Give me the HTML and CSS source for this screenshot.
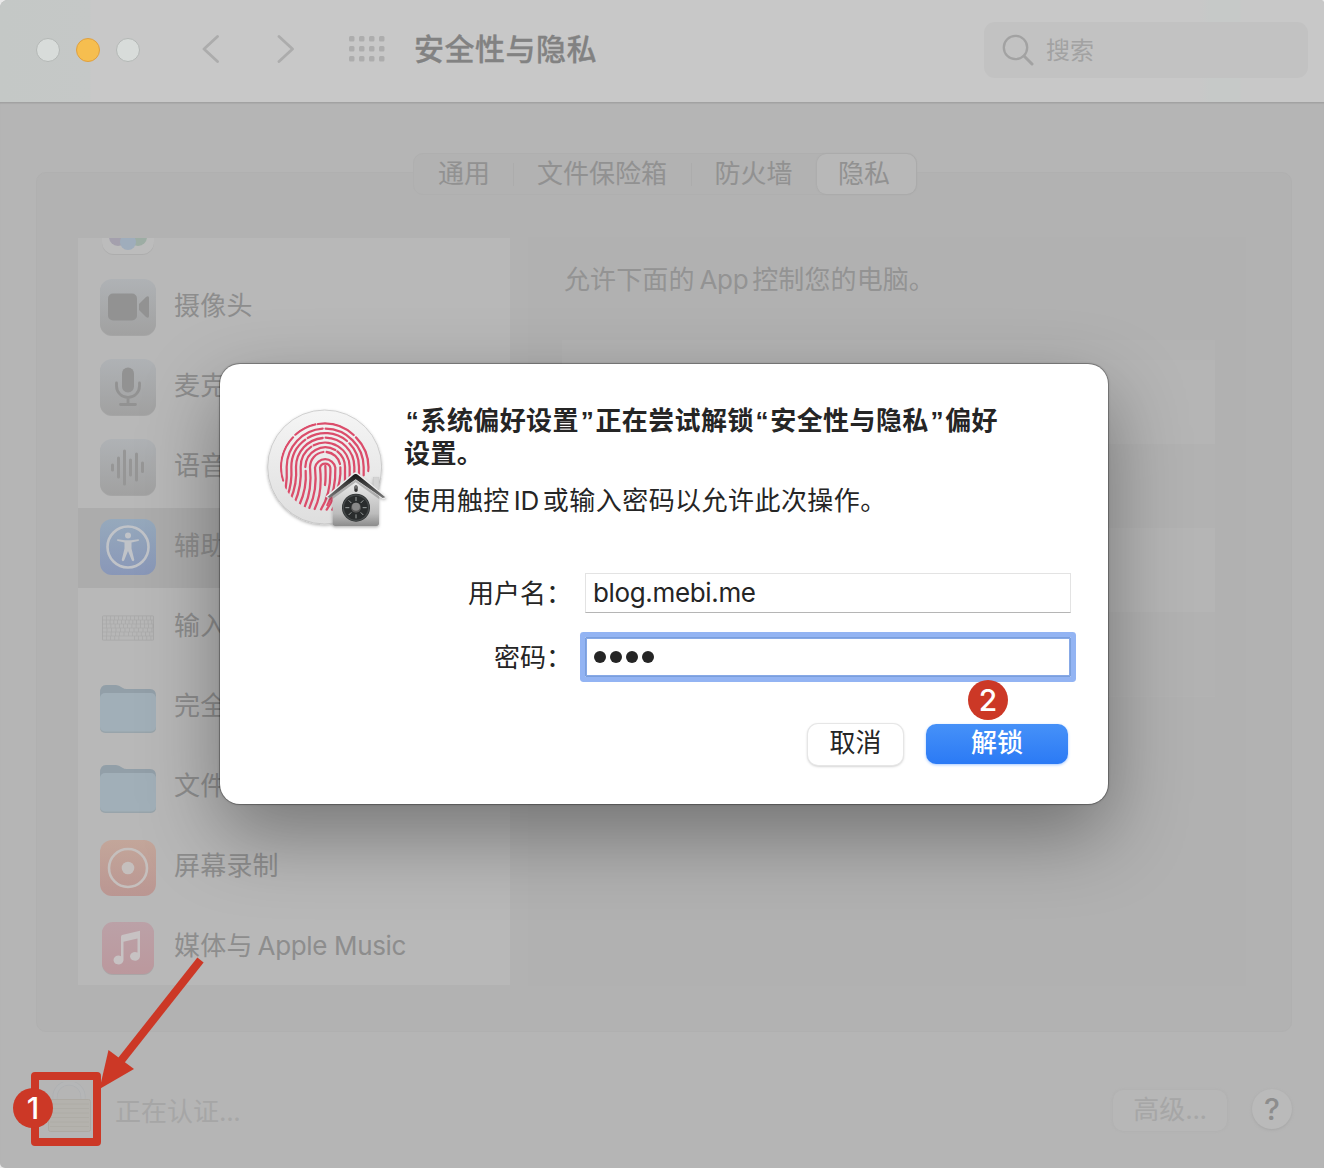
FILE: index.html
```html
<!DOCTYPE html>
<html lang="zh-CN">
<head>
<meta charset="utf-8">
<title>安全性与隐私</title>
<link rel="stylesheet" href="styles.css">
</head>
<body>
<div class="window">
  <header class="toolbar">
    <div class="lights"><i></i><i class="minimize"></i><i></i></div>
    <svg class="nav" width="92" height="28" viewBox="0 0 92 28"><path d="M15.500 1.500L2 14l13.500 12.500M77 1.500L90.500 14 77 26.500"/></svg>
    <svg class="grid" width="36" height="26" viewBox="0 0 36 26">
      <g id="dots"><rect width="5.500" height="5.500" rx="1.500"/><rect x="10" width="5.500" height="5.500" rx="1.500"/><rect x="20" width="5.500" height="5.500" rx="1.500"/><rect x="30" width="5.500" height="5.500" rx="1.500"/></g>
      <use href="#dots" y="10"/><use href="#dots" y="20"/>
    </svg>
    <h1>安全性与隐私</h1>
    <div class="search">
      <svg width="32" height="32" viewBox="0 0 32 32"><circle cx="13.500" cy="13.500" r="11.700"/><path d="M22 22l8 8" stroke-width="3"/></svg>
      <span>搜索</span>
    </div>
  </header>

  <main class="content">
    <nav class="tabs">
      <span class="tab general">通用</span><span class="tab vault">文件保险箱</span><span class="tab firewall">防火墙</span><span class="tab active">隐私</span>
    </nav>
    <section class="panel">
      <ul class="services">
        <li class="row first">
          <svg class="icon" viewBox="0 0 56 56"><rect x="2" y="4" width="52" height="52" rx="12" fill="#adadad"/><rect x="2" y="3" width="52" height="52" rx="12" fill="#bcbcbc"/><circle cx="18" cy="38" r="9" fill="#a4a0ad"/><circle cx="38" cy="38" r="9" fill="#9dada4"/><circle cx="28" cy="43" r="8" fill="#9fadbc"/></svg>
        </li>
        <li class="row">
          <svg class="icon" viewBox="0 0 56 56"><use href="#tile"/><rect x="8" y="14.500" width="29" height="27" rx="5" fill="#929292"/><path d="M39 25l7-7q3-2 3 1v18q0 3-3 1l-7-7z" fill="#929292"/></svg>
          <span>摄像头</span>
        </li>
        <li class="row">
          <svg class="icon" viewBox="0 0 56 56"><use href="#tile"/><rect x="22" y="8.500" width="12" height="25" rx="6" fill="#929292"/><path d="M16.500 24v3a11.500 11.500 0 0 0 23 0v-3M28 39v6M20.500 45.500h15" fill="none" stroke="#929292" stroke-width="2.800" stroke-linecap="round"/></svg>
          <span>麦克风</span>
        </li>
        <li class="row">
          <svg class="icon" viewBox="0 0 56 56"><use href="#tile"/><path d="M12.500 26v5M18.500 19v19M24.500 12v33M30.500 21v15M36.500 15v26M42.500 24v8.500" fill="none" stroke="#969696" stroke-width="3" stroke-linecap="round"/></svg>
          <span>语音识别</span>
        </li>
        <li class="row selected">
          <svg class="icon" viewBox="0 0 56 56"><rect width="56" height="56" rx="12" fill="url(#blue)"/><circle cx="28" cy="28" r="20.500" fill="none" stroke="#c0c3c8" stroke-width="2.600"/><circle cx="28" cy="16.500" r="3" fill="#c0c3c8"/><path d="M17.500 20.300l7.500 1h6l7.500-1q1.500 1-.3 1.800l-6.700 1.500v6l2.800 11.500q-.8 2-2.400.3L28 32l-3.900 9.400q-1.600 1.700-2.400-.3L24.500 29.600v-6l-6.700-1.500q-1.800-.8-.3-1.800z" fill="#c0c3c8"/></svg>
          <span>辅助功能</span>
        </li>
        <li class="row">
          <svg class="icon" viewBox="0 0 56 56"><rect x="2" y="16.500" width="52" height="25" rx="1.500" fill="#a6a6a6"/><g stroke="#b7b7b7" stroke-width="3.300" fill="none"><path d="M2.800 19h50.400" stroke-dasharray="3.400 .6"/><path d="M2.800 23h50.400" stroke-dasharray="3.100 .7"/><path d="M2.800 27h50.400" stroke-dasharray="3.600 .6"/><path d="M2.800 31h50.400" stroke-dasharray="3.900 .6"/><path d="M2.800 35h50.400" stroke-dasharray="3.700 .6"/><path d="M2.800 39h50.400" stroke-dasharray="3.500 .6 3.500 .6 3.500 .6 3.500 .6 15 .6"/></g></svg>
          <span>输入监控</span>
        </li>
        <li class="row low">
          <svg class="icon" viewBox="0 0 56 56"><use href="#folder"/></svg>
          <span>完全磁盘访问权限</span>
        </li>
        <li class="row low">
          <svg class="icon" viewBox="0 0 56 56"><use href="#folder"/></svg>
          <span>文件和文件夹</span>
        </li>
        <li class="row low">
          <svg class="icon" viewBox="0 0 56 56"><rect width="56" height="56" rx="12" fill="url(#orange)"/><circle cx="28" cy="28" r="19" fill="none" stroke="#c5bfbd" stroke-width="2.600"/><circle cx="28" cy="28" r="6.300" fill="#c5bfbd"/></svg>
          <span>屏幕录制</span>
        </li>
        <li class="row low">
          <svg class="icon" viewBox="0 0 56 56"><rect x="2" y="3" width="52" height="52" rx="11" fill="#aaa5a6"/><rect x="2" y="2" width="52" height="52" rx="11" fill="url(#pink)"/><path d="M22 15l18-4.200v25.700a5 4.400 0 1 1-2.500-4V18.500L23.500 21.700v18.500a5 4.400 0 1 1-2.500-4V17q0-1.700 1-2z" fill="#c7c2c3"/></svg>
          <span>媒体与<b class="latin">Apple Music</b></span>
        </li>
      </ul>
      <div class="detail">
        <p>允许下面的<b class="latin app">App</b>控制您的电脑。</p>
        <div class="apps"><i></i><i></i><i></i><i></i></div>
      </div>
    </section>
    <footer class="footer">
      <svg class="lock" width="44" height="54" viewBox="0 0 44 54"><path d="M7 19v-4a14 14 0 0 1 28 0v4" fill="none" stroke="#aeb0b2" stroke-width="5"/><path d="M7 19v-4a14 14 0 0 1 28 0v4" fill="none" stroke="#b5b6b7" stroke-width="3.600"/><rect x=".5" y="17.500" width="42" height="32" rx="2" fill="#b4b2ad" stroke="#aca9a3"/><path d="M2 22h39M2 26.500h39M2 31h39M2 35.500h39M2 40h39M2 44.500h39" stroke="#aeaca6"/></svg>
      <span class="status">正在认证<b class="latin">...</b></span>
      <span class="advanced">高级<b class="latin">...</b></span>
      <span class="help">?</span>
    </footer>
  </main>
</div>

<div class="dialog">
  <div class="intro">
    <svg class="touchid" width="160" height="150" viewBox="0 0 480 450">
      <defs>
        <linearGradient id="disc" x2="0" y2="1"><stop stop-color="#f5f5f5"/><stop offset="1" stop-color="#dedede"/></linearGradient>
        <linearGradient id="wall" x2="0" y2="1"><stop stop-color="#f2f2f2"/><stop offset=".75" stop-color="#bcbcbc"/><stop offset="1" stop-color="#8c8c8c"/></linearGradient>
        <linearGradient id="roof" x2="0" y2="1"><stop stop-color="#151515"/><stop offset="1" stop-color="#777"/></linearGradient>
        <clipPath id="print"><circle cx="225" cy="231" r="135"/></clipPath>
        <filter id="soft" x="-20%" y="-20%" width="140%" height="140%"><feDropShadow dx="0" dy="4" stdDeviation="4" flood-opacity=".3"/></filter>
      </defs>
      <circle cx="224" cy="231" r="171" fill="url(#disc)" stroke="#bdbdbd" stroke-width="2" filter="url(#soft)"/>
      <g clip-path="url(#print)" fill="none" stroke="#db4d6b" stroke-width="6.800" stroke-linecap="round">
        <path d="M99 272A130 130 0 0 1 129 142M136 134A130 130 0 0 1 196 103M204 102A130 130 0 0 1 311 135M318 142A130 130 0 0 1 355 243"/>
        <path d="M107 296Q112 262 110 231A116 116 0 0 1 218 116M227 116A116 116 0 0 1 341 231V256"/>
        <path d="M112 318Q127 280 124 231A102 102 0 0 1 166 149M173 144A102 102 0 0 1 291 153M298 160A102 102 0 0 1 327 231V262"/>
        <path d="M122 328Q142 280 138 231A88 88 0 0 1 218 144M227 143A88 88 0 0 1 313 231V270"/>
        <path d="M134 338Q156 288 152 231A74 74 0 0 1 184 170M191 166A74 74 0 0 1 299 231V285"/>
        <path d="M148 345Q171 295 167 243M166 231A60 60 0 0 1 256 180M262 184A60 60 0 0 1 285 231V290"/>
        <path d="M164 350Q187 300 180 231A46 46 0 0 1 220 186M230 186A46 46 0 0 1 270 222M271 232Q274 270 255 320"/>
        <path d="M178 354Q203 300 195 233A31 31 0 0 1 256 233Q258 300 232 345"/>
        <path d="M194 357Q218 308 210 233A16 16 0 0 1 241 233Q244 310 213 358"/>
        <path d="M230 359Q250 330 258 300M247 359L280 306M226 228Q228 265 225 285"/>
      </g>
      <g filter="url(#soft)">
        <rect x="370" y="263" width="17" height="35" fill="#d4d4d4" stroke="#bbb"/>
        <path d="M248 315L317 258l70 57v85q0 8-8 8H256q-8 0-8-8z" fill="url(#wall)"/>
        <path d="M248 315L317 258l70 57v12l-70-50-69 50z" fill="#777" opacity=".45"/>
        <path d="M226 320L307 252q10-10 20 0l84 70-12 4-82-57-80 56z" fill="#eee"/>
        <path d="M232 321L309 256q8-8 16 0l81 66-8 2-81-56-77 56z" fill="url(#roof)"/>
      </g>
      <rect x="313" y="286" width="10" height="20" rx="5" fill="#333"/><path d="M318 288v8" stroke="#aaa" stroke-width="3"/>
      <circle cx="318" cy="353" r="42" fill="#292c2d"/><circle cx="318" cy="353" r="38" fill="none" stroke="#464a4b" stroke-width="4"/>
      <path d="M318 321v12M318 373v12M286 353h12M338 353h12M296 331l8 8M332 367l8 8M296 375l8-8M332 339l8-8" stroke="#9b9f9f" stroke-width="3"/>
      <circle cx="318" cy="353" r="15" fill="#555"/><circle cx="318" cy="350" r="12" fill="#888"/>
    </svg>
    <div class="message">
      <h2><q>“</q>系统偏好设置<q>”</q>正在尝试解锁<q>“</q>安全性与隐私<q>”</q>偏好<br>设置。</h2>
      <p>使用触控<b class="latin id">ID</b>或输入密码以允许此次操作。</p>
    </div>
  </div>
  <div class="form">
    <label>用户名：</label><div class="field"><span class="latin">blog.mebi.me</span></div>
    <label>密码：</label><div class="field focused"><i></i><i></i><i></i><i></i></div>
  </div>
  <div class="buttons"><span class="button">取消</span><span class="button primary">解锁</span></div>
</div>

<svg class="arrow" width="110" height="136" viewBox="0 0 110 136"><path d="M102.500 3L22 105" stroke="#cc3826" stroke-width="8" fill="none"/><path d="M1.500 132L10.500 93 36 112z" fill="#cc3826"/></svg>
<div class="frame"></div>
<span class="marker one">1</span>
<span class="marker two">2</span>

<svg class="defs" width="0" height="0">
  <defs>
    <linearGradient id="gray" x2="0" y2="1"><stop stop-color="#afb2b5"/><stop offset="1" stop-color="#a1a1a1"/></linearGradient>
    <linearGradient id="blue" x2="0" y2="1"><stop stop-color="#96a9bc"/><stop offset="1" stop-color="#8997b8"/></linearGradient>
    <linearGradient id="orange" x2="0" y2="1"><stop stop-color="#c3a69a"/><stop offset="1" stop-color="#ba9692"/></linearGradient>
    <linearGradient id="pink" x2="0" y2="1"><stop stop-color="#bba1a7"/><stop offset="1" stop-color="#bb989d"/></linearGradient>
    <g id="tile"><rect y="1" width="56" height="56" rx="12" fill="#a5a5a5"/><rect width="56" height="56" rx="12" fill="url(#gray)"/></g>
    <g id="folder"><path d="M0 13Q0 5 6 5h10q3 0 6 2.500 2 1.500 5 1.500h23q6 0 6 7v10H0z" fill="#929fa8"/><rect y="14" width="56" height="39" rx="5" fill="#98a4ab"/><rect y="13" width="56" height="38.500" rx="5" fill="#a1afb8"/></g>
  </defs>
</svg>
</body>
</html>
```
FILE: styles.css
```css
* { box-sizing: border-box; }
body {
  position: relative;
  margin: 0;
  width: 1324px;
  height: 1168px;
  overflow: hidden;
  background: #e9e9e9;
  font: 26px/32px Inter, "Noto Sans CJK SC", sans-serif;
  color: #252525;
  white-space: nowrap;
}
h1, h2, p, ul { margin: 0; padding: 0; }
b { font-weight: inherit; }
i { display: block; }
.latin { letter-spacing: -.35px; }

.window {
  height: 1168px;
  display: flex;
  flex-direction: column;
  overflow: hidden;
  border-radius: 8px 4px 0 5px;
  background: #b5b5b5;
}
.toolbar {
  flex: none;
  display: flex;
  align-items: center;
  height: 103px;
  padding: 0 16px 3px 36px;
  border-bottom: 1px solid #a2a2a2;
  background: linear-gradient(90deg, #c4c8c6, #c5c8c7 90px, #c8c8c8 91px, #c8c8c8 1200px, #c6c9c8 1210px, #c6c9c8 1240px, #c8c8c8 1241px);
}
.lights { display: flex; gap: 16px; }
.lights i { width: 24px; height: 24px; border: 1px solid #b4b8b6; border-radius: 50%; background: #d8dcda; }
.lights .minimize { border-color: #dfa040; background: #f6be4f; }
.nav { margin: 0 0 2px 62px; fill: none; stroke: #acacac; stroke-width: 2.800; stroke-linecap: round; stroke-linejoin: round; }
.grid { margin: 0 0 1px 55px; fill: #adadad; }
h1 { margin: -2px 0 0 29px; font-size: 30px; font-weight: 500; letter-spacing: .5px; line-height: 40px; color: #828282; -webkit-text-stroke: .3px #828282; }
.search {
  display: flex; align-items: center; gap: 12px;
  width: 324px; height: 56px; margin-left: auto; padding-left: 18px;
  border-radius: 11px; background: #c2c2c2; color: #a2a2a2; font-size: 24px;
}
.search svg { fill: none; stroke: #a2a2a2; stroke-width: 2.300; stroke-linecap: round; }
.search span { padding-top: 3px; }

.content {
  flex: 1;
  display: flex;
  flex-direction: column;
  padding: 50px 32px 0 36px;
  box-shadow: inset 0 1px 1px #aaa;
}
.tabs {
  z-index: 1;
  align-self: flex-start;
  display: flex;
  width: 504px;
  height: 42px;
  margin-left: 377px;
  border: 1px solid #afafaf;
  border-radius: 10px;
  background: #b2b2b2;
  color: #919191;
}
.tab { position: relative; text-align: center; line-height: 39px; }
.general { width: 100px; }
.vault { width: 178px; padding-right: 2px; }
.firewall { width: 125px; padding-right: 2px; }
.general::after, .vault::after { content: ""; position: absolute; right: 0; top: 9px; width: 1px; height: 23px; background: #acacac; }
.active { width: 99px; height: 40px; border-radius: 9px; background: #b8b8b8; box-shadow: 0 0 2px #a0a0a0; padding-right: 5px; }

.panel {
  display: flex;
  gap: 18px;
  height: 860px;
  margin-top: -23px;
  padding: 64px 45px 45px 41px;
  border: 1px solid #b0b0b0;
  border-radius: 10px;
  background: #b2b2b2;
}
.services { width: 432px; height: 747px; margin-top: 1px; overflow: hidden; background: #b8b8b8; color: #8d8d8d; list-style: none; }
.row { display: flex; align-items: center; gap: 18px; height: 80px; padding: 0 22px; }
.row span { padding-bottom: 4px; letter-spacing: .2px; }
.row.first { margin-top: -50px; }
.row.selected { background: #acacac; }
.icon { width: 56px; height: 56px; flex: none; overflow: visible; margin-top: -2px; }
.low .icon { margin-top: 0; }
.row .latin { margin-left: 5px; letter-spacing: -.35px; }
.detail { width: 718px; padding: 27px 31px 0 34px; background: #b1b1b1; }
.detail p { margin-left: 2px; color: #939393; letter-spacing: .1px; }
.app { margin: 0 4px 0 5px; }
.apps { width: 653px; height: 357px; margin-top: 44px; padding-top: 20px; background: #b3b3b3; }
.apps i { height: 84px; background: #b2b2b2; }
.apps i:nth-child(odd) { background: #b5b5b5; }

.footer { display: flex; align-items: center; padding: 50px 0 0 12px; color: #a6a6a6; }
.lock { margin-right: 23px; }
.status { padding-top: 5px; }
.advanced { width: 114px; height: 41px; margin: 2px 1px 0 auto; border-radius: 10px; background: #b7b7b7; box-shadow: 0 0 3px #adadad; text-align: center; line-height: 39px; }
.help { width: 40px; height: 40px; margin-left: 24px; border-radius: 50%; background: #bababa; box-shadow: 0 1px 3px #a6a6a6; color: #8d8d8d; text-align: center; font-size: 30px; font-weight: 500; line-height: 40px; }

.dialog {
  position: absolute; left: 220px; top: 364px;
  width: 888px; height: 440px;
  border-radius: 20px;
  background: #fff;
  box-shadow: 0 0 0 1px rgba(0,0,0,.22), 0 0 3px rgba(0,0,0,.3), 0 30px 78px rgba(0,0,0,.36);
}
.intro { display: flex; height: 209px; padding: 26px 0 0 30px; }
.touchid { flex: none; }
.message { padding-top: 15px; margin-left: -6px; }
h2 { font-size: 26px; line-height: 32.500px; font-weight: 600; letter-spacing: .4px; }
q { display: inline-block; width: 16.500px; font-family: "Liberation Sans", sans-serif; line-height: 30px; letter-spacing: 0; text-align: center; }
q::before, q::after { content: none; }
.message p { margin-top: 15px; letter-spacing: .45px; }
.id { margin: 0 4px; }
.form { display: grid; grid-template-columns: 352px 486px; column-gap: 13px; row-gap: 24px; grid-auto-rows: 40px; }
label { text-align: right; line-height: 42px; }
.field { height: 40px; padding-left: 7px; border: 1px solid #e3e3e3; border-bottom: 1px solid #b5b5b5; line-height: 38px; }
.focused { display: flex; align-items: center; gap: 4px; padding-left: 8px; border-color: #7b9fdc; box-shadow: 0 0 0 5px #93b4f3, inset 0 0 0 1px #87a9e7; border-radius: 1px; }
.focused i { width: 12px; height: 12px; border-radius: 50%; background: #252525; }
.buttons { display: flex; justify-content: flex-end; gap: 23px; padding: 47px 40px 0 0; }
.button { width: 95px; height: 41px; border-radius: 10px; background: #fff; box-shadow: 0 0 0 1px #e6e6e6, 0 1px 3px #aaa; text-align: center; line-height: 38px; }
.primary { width: 142px; height: 40px; background: linear-gradient(#4691f8, #2b7af5); box-shadow: 0 1px 3px #a8caff; color: #fff; font-weight: 500; }

.arrow { position: absolute; left: 98px; top: 957px; }
.frame { position: absolute; left: 31px; top: 1072px; width: 70px; height: 74px; border: 8px solid #cc3826; border-radius: 4px; }
.marker { position: absolute; width: 40px; height: 40px; border-radius: 50%; background: #cc3826; color: #fff; text-align: center; font-size: 30px; font-weight: 500; line-height: 40px; }
.one { left: 13px; top: 1088px; }
.two { left: 968px; top: 680px; }
.defs { position: absolute; }
```
